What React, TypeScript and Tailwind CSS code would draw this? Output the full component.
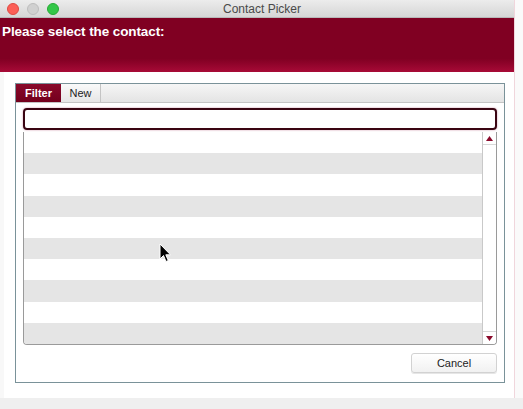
import React from "react";

export default function App() {
  const rows = Array.from({ length: 10 }, (_, i) => i);
  return (
    <div className="relative w-[523px] h-[409px] overflow-hidden bg-[#f7f7f7] font-['Liberation_Sans',Arial,sans-serif]">
      <div className="flex h-[398px]">
        <div className="w-[514px] flex flex-col bg-white">
          {/* title bar */}
          <div className="relative h-[18px] bg-gradient-to-b from-[#ececec] to-[#d6d6d6] border-b border-[#b9b9b9] flex items-center justify-center pl-[10px]">
            <div className="absolute left-[7px] top-[3px] flex gap-[8px]">
              <span className="w-[12px] h-[12px] rounded-full bg-[#fc5f57] border border-[#de4a42]" />
              <span className="w-[12px] h-[12px] rounded-full bg-[#d0d0d0] border border-[#bdbdbd]" />
              <span className="w-[12px] h-[12px] rounded-full bg-[#33c748] border border-[#27aa35]" />
            </div>
            <span className="text-[12px] text-[#4a4a4a] leading-none">Contact Picker</span>
          </div>
          {/* header */}
          <div className="h-[54px] bg-gradient-to-b from-[#800022] from-75% to-[#a80b37] px-[2px] pt-[5px]">
            <div className="text-white text-[13.5px] font-bold leading-[17px] tracking-[-0.1px]">Please select the contact:</div>
          </div>
          {/* body */}
          <div className="flex-1 flex pl-[4px] bg-[#f8f8f8]">
            <div className="flex-1 bg-white pt-[11px] pl-[11px] pr-[9px]">
              <div className="h-[300px] border border-[#7a9299] flex flex-col">
                {/* tabs */}
                <div className="h-[19px] flex bg-gradient-to-b from-[#f6f6f6] to-[#e4e4e4] border-b border-[#c4c4c4]">
                  <div className="w-[45px] bg-gradient-to-b from-[#8a0a2b] to-[#73001d] text-white text-[11px] font-bold flex items-center justify-center">Filter</div>
                  <div className="w-[40px] bg-gradient-to-b from-[#fafafa] to-[#e6e6e6] border-r border-[#c4c4c4] text-[#222] text-[11px] flex items-center justify-center">New</div>
                </div>
                <div className="flex-1 px-[7px] pt-[5px] flex flex-col">
                  <div className="h-[22px] rounded-[4px] border-2 border-[#3a0512] shadow-[0_0_2px_#c88aa0]" />
                  <div className="mt-[2px] h-[213px] border border-[#9a9a9a] border-t-0 rounded-b-[4px] flex overflow-hidden">
                    <div className="flex-1 flex flex-col">
                      {rows.map((i) => (
                        <div key={i} className={i % 2 === 1 ? "h-[21.3px] bg-[#e5e5e5]" : "h-[21.3px] bg-white"} />
                      ))}
                    </div>
                    <div className="w-[14px] bg-white border-l border-[#c9c9c9] flex flex-col justify-between">
                      <div className="h-[13px] flex items-center justify-center border-b border-[#d8d8d8]">
                        <svg width="7" height="5" viewBox="0 0 7 5"><path d="M3.5 0 L7 5 L0 5 Z" fill="#8a0a2b" /></svg>
                      </div>
                      <div className="h-[13px] flex items-center justify-center border-t border-[#d8d8d8]">
                        <svg width="7" height="5" viewBox="0 0 7 5"><path d="M0 0 L7 0 L3.5 5 Z" fill="#8a0a2b" /></svg>
                      </div>
                    </div>
                  </div>
                  <div className="mt-[8px] flex justify-end">
                    <button className="w-[86px] h-[20px] rounded-[3px] border border-[#d2d2d2] bg-gradient-to-b from-white to-[#f1f1f1] text-[11px] text-[#222] shadow-[0_1px_0_#e6e6e6]">Cancel</button>
                  </div>
                </div>
              </div>
            </div>
          </div>
        </div>
        <div className="w-[9px] bg-[#fafafa] border-l border-[#f0d6dc]" />
      </div>
      <div className="h-[11px] bg-[#efefef]" />
      {/* mouse cursor */}
      <svg className="absolute left-[159px] top-[243px]" width="13" height="20" viewBox="0 0 13 20">
        <path d="M1 1 L1 16 L4.5 12.5 L7 18.5 L9.3 17.5 L6.8 11.8 L11.5 11.8 Z" fill="#000" stroke="#fff" strokeWidth="1" />
      </svg>
    </div>
  );
}
